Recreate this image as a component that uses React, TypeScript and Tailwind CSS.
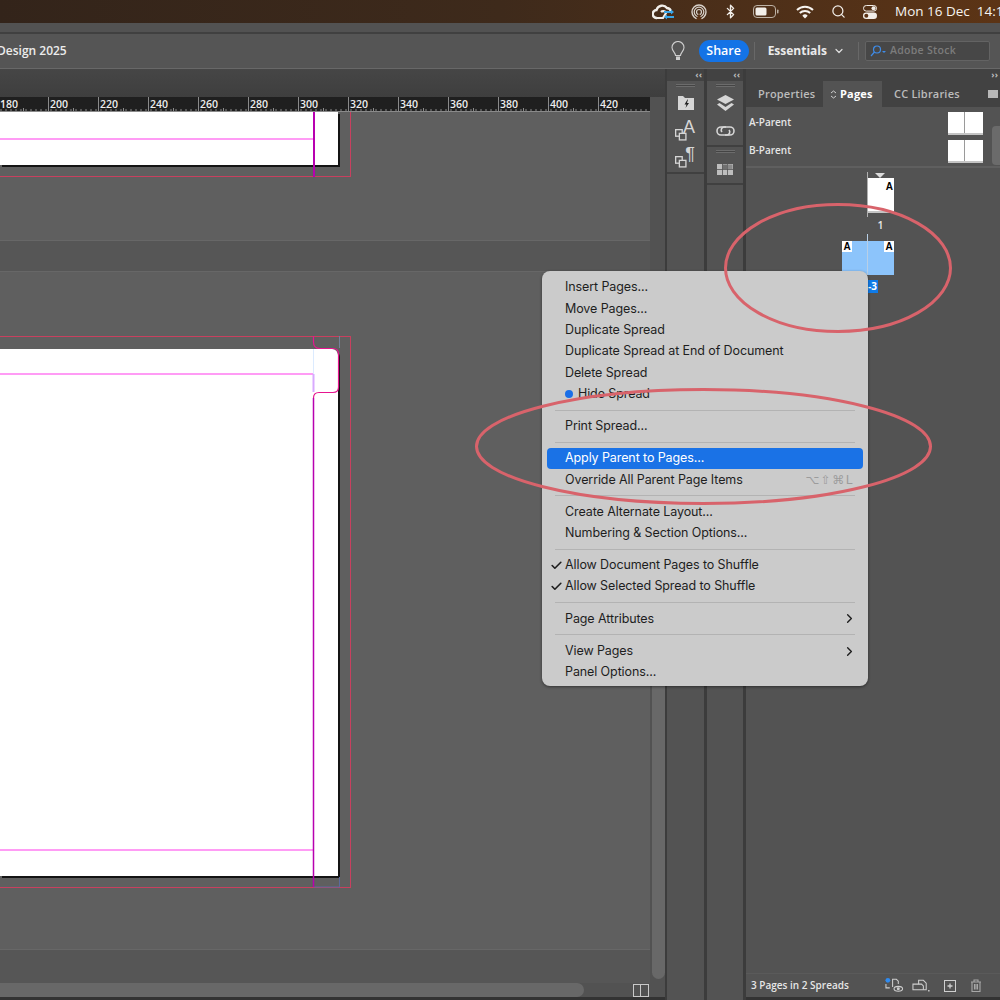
import { Bluetooth, Check, ChevronDown, ChevronRight, Search } from "lucide-react";

const rulerLabels = [180, 200, 220, 240, 260, 280, 300, 320, 340, 360, 380, 400, 420];

type MenuEntry =
  | { sep: true }
  | { label: string; check?: boolean; dot?: boolean; active?: boolean; shortcut?: string; sub?: boolean };

const menuItems: MenuEntry[] = [
  { label: "Insert Pages..." },
  { label: "Move Pages..." },
  { label: "Duplicate Spread" },
  { label: "Duplicate Spread at End of Document" },
  { label: "Delete Spread" },
  { label: "Hide Spread", dot: true },
  { sep: true },
  { label: "Print Spread..." },
  { sep: true },
  { label: "Apply Parent to Pages...", active: true },
  { label: "Override All Parent Page Items", shortcut: "⌥⇧⌘L" },
  { sep: true },
  { label: "Create Alternate Layout..." },
  { label: "Numbering & Section Options..." },
  { sep: true },
  { label: "Allow Document Pages to Shuffle", check: true },
  { label: "Allow Selected Spread to Shuffle", check: true },
  { sep: true },
  { label: "Page Attributes", sub: true },
  { sep: true },
  { label: "View Pages", sub: true },
  { label: "Panel Options..." },
];

const RulerCell = ({ value }: { value: number }) => (
  <div className="w-[50px] shrink-0 h-full relative border-l border-[#8a8a8a]">
    <span className="block pl-[1px] leading-[14px] text-[10.5px] font-semibold text-[#eeeeee]">{value}</span>
    <svg width="50" height="3" className="absolute left-0 bottom-0">
      {Array.from({ length: 10 }).map((_, i) => (
        <line key={i} x1={i * 5 + 2} x2={i * 5 + 2} y1="1" y2="3" stroke="#8a8a8a" />
      ))}
      <line x1="24.5" x2="24.5" y1="-3" y2="3" stroke="#8a8a8a" />
    </svg>
  </div>
);

const MenuBarIcons = () => (
  <div className="flex items-center w-max h-full text-[#f2eee9]">
    {/* creative cloud */}
    <svg width="24" height="18" viewBox="0 0 24 18" className="mr-[15px]">
      <path d="M5 15a4 4 0 0 1-.5-8A6 6 0 0 1 15 5a4.5 4.5 0 0 1 4 4" fill="none" stroke="#f2eee9" strokeWidth="2.4" />
      <path d="M5 15h6l3-5a3 3 0 0 0-5-1" fill="none" stroke="#f2eee9" strokeWidth="2.2" />
      <path d="M12 9h8M14 14h8" stroke="#39a6e8" strokeWidth="1.8" />
      <path d="M19 6.5 22 9l-3 2.500M15 11.500 12 14l3 2.500" fill="#39a6e8" />
    </svg>
    {/* airdrop */}
    <svg width="16" height="16" viewBox="0 0 16 16" className="mr-[16px]" fill="none" stroke="#d9d2cb">
      <circle cx="8" cy="8" r="7" strokeWidth="1.4" />
      <circle cx="8" cy="8" r="4.800" strokeWidth="1.2" />
      <circle cx="8" cy="8" r="2.500" strokeWidth="1.2" />
      <path d="M5 16 8 9l3 7" fill="#5a3216" stroke="none" />
    </svg>
    <Bluetooth size={15} strokeWidth={2.2} className="mr-[15px]" />
    {/* battery */}
    <svg width="26" height="13" viewBox="0 0 26 13" className="mr-[17px]">
      <rect x="0.500" y="0.500" width="22" height="12" rx="3.500" fill="none" stroke="#bdb2a6" />
      <rect x="2.500" y="2.500" width="11" height="8" rx="1.500" fill="#f2eee9" />
      <rect x="24" y="4.500" width="1.500" height="4" rx="0.700" fill="#bdb2a6" />
    </svg>
    {/* wifi */}
    <svg width="18" height="14" viewBox="0 0 18 14" className="mr-[17px]" fill="none" stroke="#f7f4f0" strokeWidth="2">
      <path d="M1 5a11.500 11.500 0 0 1 16 0" />
      <path d="M3.800 8a7.500 7.500 0 0 1 10.400 0" />
      <path d="M9 13.500 6.300 10.700a3.800 3.800 0 0 1 5.400 0Z" fill="#f7f4f0" stroke="none" />
    </svg>
    <Search size={15} strokeWidth={2} className="mr-[17px]" />
    {/* control centre */}
    <svg width="14" height="14" viewBox="0 0 14 14" className="mr-[18px]">
      <rect x="0.500" y="0.500" width="13" height="5.600" rx="2.800" fill="none" stroke="#f2eee9" />
      <circle cx="10.500" cy="3.300" r="2" fill="#f2eee9" />
      <rect x="0" y="7.500" width="14" height="6.500" rx="3.200" fill="#f2eee9" />
      <circle cx="3.300" cy="10.700" r="2" fill="#5a3216" />
    </svg>
    <span className="text-[13.5px] leading-none whitespace-nowrap font-medium text-[#f7f4f0]">Mon 16 Dec&nbsp; 14:14</span>
  </div>
);

const AutoFolderIcon = () => (
  <svg width="18" height="16" viewBox="0 0 18 16">
    <path d="M1 1h5l2 2h9v12H1Z" fill="#d6d6d6" />
    <path d="M10.500 4.500 7.500 9.500h2l-1 3.500 3.500-5h-2l1-3.500Z" fill="#222" />
  </svg>
);

const CharStyleIcon = ({ glyph }: { glyph: string }) => (
  <div className="relative w-[20px] h-[20px]">
    <span className="absolute right-0 top-[-4px] text-[18px] leading-[20px] text-[#d6d6d6]" style={{ fontFamily: "'Liberation Sans', sans-serif" }}>
      {glyph}
    </span>
    <svg width="12" height="12" viewBox="0 0 11 11" className="absolute left-0 bottom-0" fill="none" stroke="#d6d6d6" strokeWidth="1.200">
      <rect x="0.600" y="0.600" width="6" height="6" />
      <rect x="4" y="4" width="6" height="6" fill="#535353" />
    </svg>
  </div>
);

const LayersIcon = () => (
  <svg width="17" height="16" viewBox="0 0 17 16" fill="#d6d6d6">
    <path d="M8.500 0 17 4.500 8.500 9 0 4.500Z" />
    <path d="M2.500 8 0 9.500 8.500 16 17 9.500 14.500 8 8.500 12Z" />
  </svg>
);

const LinksIcon = () => (
  <svg width="19" height="10" viewBox="0 0 19 10" fill="none" stroke="#d6d6d6" strokeWidth="1.600">
    <path d="M10 1H5a4 4 0 0 0 0 8h6a3 3 0 0 0 2-5" />
    <path d="M9 9h5a4 4 0 0 0 0-8H8a3 3 0 0 0-2 5" />
  </svg>
);

const SwatchGridIcon = () => (
  <svg width="16" height="11" viewBox="0 0 16 11">
    <rect width="16" height="11" fill="#bdbdbd" />
    <rect x="5.500" y="0.500" width="4.500" height="4.500" fill="#707070" />
    <rect x="11" y="0.500" width="4.500" height="4.500" fill="#8a8a8a" />
    <path d="M0 5.500h16M5.500 0v11M10.500 0v11" stroke="#535353" strokeWidth="0.800" />
  </svg>
);

const DockGrip = () => <div className="h-[3px] w-[19px] mx-auto mt-[3px] border-y border-[#6c6c6c] bg-[#444]" />;

const ParentRow = ({ label }: { label: string }) => (
  <div className="flex items-center justify-between h-[28px]">
    <span className="-mt-[2px] text-[10px] font-semibold text-[#e6e6e6]">{label}</span>
    <div className="flex w-[35px] h-[23px] bg-white border-b-2 border-[#c4c4c4] mr-[17px]">
      <div className="w-[17px] h-full border-r border-[#9a9a9a]" />
    </div>
  </div>
);

const Badge = ({ children }: { children: string }) => (
  <span className="text-[10px] font-bold leading-none text-black" style={{ fontFamily: "'Liberation Sans', sans-serif" }}>
    {children}
  </span>
);

const PanelFooterIcons = () => (
  <div className="flex items-center text-[#cfcfcf]">
    <svg width="19" height="17" viewBox="0 0 20 17" fill="none" stroke="#cfcfcf" strokeWidth="1.100">
      <circle cx="3" cy="3" r="2.500" fill="#2f8bf0" stroke="none" />
      <path d="M1 7v4h4M8 10V2h4l2 2v3" />
      <ellipse cx="14" cy="12" rx="4.500" ry="2.600" />
      <circle cx="14" cy="12" r="1" fill="#cfcfcf" />
    </svg>
    <svg width="18" height="14" viewBox="0 0 19 14" fill="none" stroke="#cfcfcf" strokeWidth="1.100" className="ml-[8px]">
      <path d="M1 5h6V1h5l3 3v7H1Z" />
      <path d="M7 5h3l2 2v4" />
      <path d="M17 12h1.500" strokeWidth="1.400" />
    </svg>
    <svg width="12" height="12" viewBox="0 0 12 12" fill="none" stroke="#cfcfcf" className="ml-[14px]">
      <rect x="0.500" y="0.500" width="11" height="11" />
      <path d="M6 3.500v5M3.500 6h5" strokeWidth="1.300" />
    </svg>
    <svg width="12" height="13" viewBox="0 0 12 13" fill="none" stroke="#a8a8a8" strokeWidth="1.100" className="ml-[14px]">
      <path d="M1 3h10M4 3V1h4v2M2 3v9.500h8V3M4.500 5v5.500M6 5v5.500M7.500 5v5.500" />
    </svg>
  </div>
);

const PageMenu = () => (
  <div
    className="absolute left-[542px] top-[271px] w-[326px] h-[415px] pt-[6px] rounded-[8px] bg-[#cbcbcb] shadow-[0_1px_3px_rgba(0,0,0,0.45)] text-[12.5px] tracking-[-0.1px] text-[#1e1e1e]"
    style={{ fontFamily: "Inter, sans-serif" }}
  >
    {menuItems.map((item, i) =>
      "sep" in item ? (
        <div key={i} className="h-[10.8px] mx-[13px] flex items-center">
          <div className="w-full h-px bg-[#b3b3b3]" />
        </div>
      ) : (
        <div
          key={i}
          className={
            item.active
              ? "relative h-[21.33px] mx-[5px] pl-[18px] pr-[9px] flex items-center rounded-[4px] bg-[#1a72e6] text-white"
              : "relative h-[21.33px] mx-[5px] pl-[18px] pr-[9px] flex items-center"
          }
        >
          {item.check && <Check size={13} strokeWidth={3} className="absolute left-[3px] top-[4px]" />}
          {item.dot && <span className="w-[8px] h-[8px] mr-[5px] rounded-full bg-[#1a6fe8]" />}
          <span className="whitespace-nowrap">{item.label}</span>
          {item.shortcut && (
            <span className="ml-auto text-[12px] tracking-[1.5px] text-[#9c9c9c]" style={{ fontFamily: "'DejaVu Sans', sans-serif" }}>
              {item.shortcut}
            </span>
          )}
          {item.sub && <ChevronRight size={15} strokeWidth={2.2} className="ml-auto -mr-[3px]" />}
        </div>
      )
    )}
  </div>
);

const App = () => {
  return (
    <div
      className="relative w-[1000px] h-[1000px] overflow-hidden flex flex-col bg-[#333333]"
      style={{ fontFamily: "'Open Sans', sans-serif" }}
    >
      {/* system menu bar */}
      <div className="h-[23px] shrink-0 pl-[652px] overflow-hidden whitespace-nowrap bg-gradient-to-r from-[#33241a] via-[#3e2a1b] to-[#5c3415]">
        <MenuBarIcons />
      </div>

      {/* window chrome */}
      <div className="h-[11px] shrink-0 bg-[#525252] border-b-2 border-[#404040]" />
      <div className="h-[35px] shrink-0 flex items-center bg-[#555555] border-b border-[#686868]">
        <span className="-ml-[3px] text-[12px] font-semibold text-[#ececec]">Design 2025</span>
        <div className="ml-auto flex items-center">
          <svg width="14" height="20" viewBox="0 0 14 20" fill="none" stroke="#cfcfcf" strokeWidth="1.100" className="mr-[14px]">
            <path d="M4.500 14.500C4.500 11.500 1 10 1 6.500a6 6 0 0 1 12 0c0 3.500-3.500 5-3.500 8Z" />
            <rect x="5" y="15.500" width="4" height="3.500" fill="#cfcfcf" stroke="none" />
          </svg>
          <div className="w-[50px] h-[22px] mr-[5px] rounded-full bg-[#1473e6] flex items-center justify-center text-[12.5px] font-semibold text-white">
            Share
          </div>
          <div className="w-px h-[18px] bg-[#686868] mr-[13px]" />
          <span className="text-[12px] font-bold text-[#eaeaea]">Essentials</span>
          <ChevronDown size={12} strokeWidth={2.4} className="ml-[6px] mr-[13px] text-[#e0e0e0]" />
          <div className="w-px h-[18px] bg-[#686868] mr-[6px]" />
          <div className="w-[125px] h-[20px] mr-[10px] rounded-[2px] bg-[#474747] border border-[#636363] flex items-center pl-[4px]">
            <svg width="16" height="12" viewBox="0 0 16 12" fill="none" stroke="#3f8ce8" strokeWidth="1.200">
              <circle cx="7" cy="4.500" r="3.500" />
              <path d="M4.500 7 1 11" />
              <path d="M12 6h4l-2 2Z" fill="#3f8ce8" stroke="none" />
            </svg>
            <span className="ml-[4px] text-[10.5px] font-semibold tracking-[0.3px] text-[#7c7c7c]">Adobe Stock</span>
          </div>
        </div>
      </div>

      {/* workspace */}
      <div className="flex-1 flex min-h-0">
        {/* document area */}
        <div className="w-[665px] shrink-0 flex flex-col">
          <div className="h-[28px] shrink-0 bg-gradient-to-b from-[#464646] to-[#3e3e3e]" />
          <div className="h-[886px] shrink-0 flex">
            <div className="w-[650px] shrink-0 flex flex-col overflow-hidden">
              <div className="h-[15px] shrink-0 flex -ml-[2px] bg-[#1f1f1f] border-b border-[#8a8a8a] overflow-hidden">
                {rulerLabels.map((v) => (
                  <RulerCell key={v} value={v} />
                ))}
              </div>

              {/* first spread */}
              <div className="h-[128px] shrink-0 bg-[#5f5f5f]">
                <div className="relative w-[351px] h-[65px] border-r border-b border-[#c8405f]">
                  <div className="w-[338px] h-[53px] bg-white shadow-[2px_2px_0_#141414]">
                    <div className="w-[313px] h-[28px] border-b-2 border-[#ff9cf5]" />
                  </div>
                  <div className="absolute left-[313px] top-0 w-[1.5px] h-[65px] bg-[#b800b0]" />
                </div>
              </div>
              <div className="h-[32px] shrink-0 bg-[#565656] border-y border-[#676767]" />

              {/* second spread */}
              <div className="h-[678px] shrink-0 pt-[64px] bg-[#5f5f5f] border-b border-[#676767]">
                <div className="relative w-[351px] h-[552px] border-t border-r border-b border-[#c8405f] pt-[12px]">
                  <div className="w-[338px] h-[527px] pt-[24px] bg-white rounded-tr-[6px] shadow-[2px_2px_0_#141414]">
                    <div className="w-[313px] h-[478px] border-y-2 border-[#ff9cf5]" />
                  </div>
                  <svg width="351" height="552" viewBox="0 0 351 552" fill="none" className="absolute left-0 -top-px">
                    <path d="M339.500 541V551H313.500" stroke="#5b6a9e" />
                    <path d="M339.500 0V12" stroke="#75809a" />
                    <path d="M313.500 13V38" stroke="#dcebff" />
                    <path d="M313.500 38V56" stroke="#d8aaff" strokeWidth="2" />
                    <path d="M313.500 62V551" stroke="#b800b0" strokeWidth="1.500" />
                    <path
                      d="M313.500 0V6Q313.500 12.500 320 12.500H333Q338.500 12.500 338.500 18V51Q338.500 56.500 333 56.500H319Q313.500 56.500 313.500 62"
                      stroke="#e6158f"
                      strokeWidth="1.200"
                    />
                  </svg>
                </div>
              </div>
              <div className="flex-1 bg-[#565656]" />
            </div>

            {/* vertical scrollbar */}
            <div className="w-[15px] shrink-0 pl-[2px] bg-[#525252]">
              <div className="mt-[203px] h-[679px] rounded-b-full rounded-t-full bg-[#686868]" />
            </div>
          </div>

          {/* horizontal scrollbar */}
          <div className="h-[14px] shrink-0 flex items-center bg-[#525252]">
            <div className="w-[584px] h-full rounded-r-full bg-[#686868]" />
            <div className="ml-auto mr-[16px] flex w-[16px] h-[13px] border border-[#c9c9c9]">
              <div className="w-[7px] h-full border-r border-[#c9c9c9]" />
            </div>
          </div>
          <div className="flex-1 bg-[#333333]" />
        </div>

        {/* icon docks */}
        <div className="w-[2px] shrink-0 bg-[#3c3c3c]" />
        <div className="w-[37px] shrink-0 flex flex-col bg-[#535353]">
          <div className="h-[12px] shrink-0 bg-[#424242] text-right pr-[2px] text-[9px] leading-[11px] font-bold text-[#bdbdbd]">‹‹</div>
          <div className="h-[93px] shrink-0 border-b-2 border-[#404040] flex flex-col items-center">
            <DockGrip />
            <div className="mt-[8px]">
              <AutoFolderIcon />
            </div>
            <div className="mt-[10px] -ml-[1px]">
              <CharStyleIcon glyph="A" />
            </div>
            <div className="mt-[7px] -ml-[1px]">
              <CharStyleIcon glyph="¶" />
            </div>
          </div>
        </div>
        <div className="w-[3px] shrink-0 bg-[#3c3c3c]" />
        <div className="w-[36px] shrink-0 flex flex-col bg-[#535353]">
          <div className="h-[12px] shrink-0 bg-[#424242] text-right pr-[3px] text-[9px] leading-[11px] font-bold text-[#bdbdbd]">‹‹</div>
          <div className="h-[66px] shrink-0 border-b-2 border-[#404040] flex flex-col items-center">
            <DockGrip />
            <div className="mt-[8px]">
              <LayersIcon />
            </div>
            <div className="mt-[15px]">
              <LinksIcon />
            </div>
          </div>
          <div className="h-[38px] shrink-0 border-b-2 border-[#404040] flex flex-col items-center">
            <DockGrip />
            <div className="mt-[11px]">
              <SwatchGridIcon />
            </div>
          </div>
        </div>
        <div className="w-[3px] shrink-0 bg-[#3c3c3c]" />

        {/* pages panel */}
        <div className="flex-1 flex flex-col min-w-0 bg-[#535353]">
          <div className="h-[12px] shrink-0 bg-[#424242] text-right pr-[2px] text-[9px] leading-[11px] font-bold text-[#bdbdbd]">››</div>
          <div className="h-[26px] shrink-0 flex items-center bg-[#424242] text-[11px] font-semibold tracking-[0.2px] text-[#bcbcbc]">
            <div className="ml-[12px] w-[65px] whitespace-nowrap">Properties</div>
            <div className="w-[59px] h-full flex items-center pl-[7px] bg-[#535353] font-bold text-white">
              <svg width="7" height="9" viewBox="0 0 7 9" fill="none" stroke="#d0d0d0" className="mr-[3px]">
                <path d="M1 3 3.500 1 6 3M1 6l2.500 2L6 6" />
              </svg>
              Pages
            </div>
            <div className="ml-[12px] whitespace-nowrap">CC Libraries</div>
            <div className="ml-auto mr-[2px] w-[10px] h-[8px] border-y-2 border-[#b8b8b8] bg-[#b8b8b8]" />
          </div>

          <div className="relative h-[61px] shrink-0 pl-[3px] pt-[2px] border-b-2 border-[#5f5f5f]">
            <ParentRow label="A-Parent" />
            <ParentRow label="B-Parent" />
            <div className="absolute right-0 top-[19px] w-[8px] h-[39px] rounded-l-[4px] bg-[#6b6b6b]" />
          </div>

          {/* page thumbnails */}
          <div className="flex-1 flex flex-col items-end pr-[106px]">
            <div className="relative mt-[10px] w-[27px] h-[35px] bg-white border-b-2 border-[#c4c4c4] text-right pr-[1px] leading-[12px]">
              <Badge>A</Badge>
              <div className="absolute left-0 -top-[6px] w-px h-[45px] bg-[#b0b0b0]" />
              <div className="absolute left-[8px] -top-[5px] w-0 h-0 border-x-[5px] border-x-transparent border-t-[5px] border-t-[#dcdcdc]" />
            </div>
            <div className="w-[27px] mt-[6px] text-center text-[10.5px] leading-[12px] font-semibold text-[#e6e6e6]">1</div>
            <div className="relative mt-[10px] w-[52px] h-[34px] flex justify-between bg-[#8cc4fb]">
              <span className="w-[10px] h-[11px] bg-white flex items-center justify-center">
                <Badge>A</Badge>
              </span>
              <span className="w-[10px] h-[11px] bg-white flex items-center justify-center">
                <Badge>A</Badge>
              </span>
              <div className="absolute left-[25px] -top-[7px] w-px h-[41px] bg-[#b8cfe6]" />
            </div>
            <div className="mt-[5px] mr-[16px] w-[20px] h-[13px] bg-[#0f7be8] text-right pr-[1px] text-[10px] leading-[13px] font-bold text-white">
              2-3
            </div>
          </div>

          <div className="h-[24px] shrink-0 pl-[5px] pr-[18px] flex items-center justify-between border-t border-[#5a5a5a]">
            <span className="text-[10px] font-semibold text-[#e6e6e6] whitespace-nowrap">3 Pages in 2 Spreads</span>
            <PanelFooterIcons />
          </div>
          <div className="h-[3px] shrink-0 bg-[#333333]" />
        </div>
      </div>

      <PageMenu />

      {/* hand-drawn annotation rings */}
      <svg width="1000" height="1000" viewBox="0 0 1000 1000" fill="none" className="absolute inset-0 pointer-events-none">
        <ellipse cx="838" cy="268" rx="112.500" ry="63.500" stroke="#d8636b" strokeWidth="3" />
        <ellipse cx="703.500" cy="446.500" rx="227" ry="57" stroke="#d8636b" strokeWidth="3" />
      </svg>
    </div>
  );
};

export default App;
